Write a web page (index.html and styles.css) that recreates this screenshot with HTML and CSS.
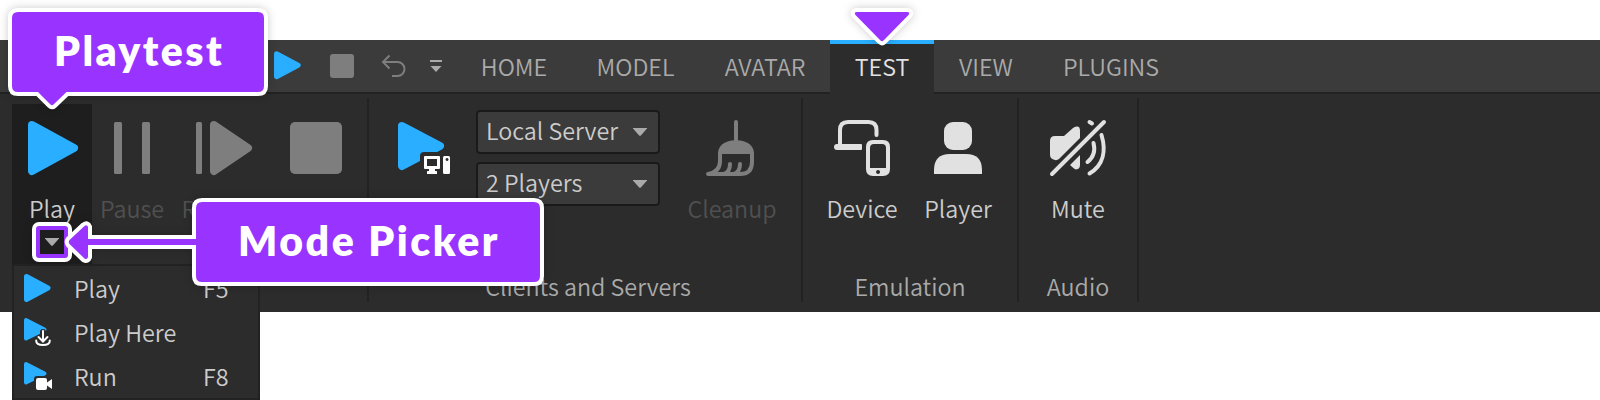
FILE: index.html
```html
<!DOCTYPE html>
<html lang="en">
<head>
<meta charset="utf-8">
<title>Studio Toolbar</title>
<link rel="stylesheet" href="styles.css">
</head>
<body>
<div class="stage">
  <header class="tabbar">
    <div class="quick">
      <svg class="q-play" width="28" height="30" viewBox="274 50 28 30"><path class="blue r5" d="M276.5 53.8L298.2 65.2L276.5 76.7Z"/></svg>
      <svg class="q-stop" width="24" height="24" viewBox="0 0 24 24"><rect class="gray" width="24" height="24" rx="3"/></svg>
      <svg class="q-undo" width="26" height="24" viewBox="381 55 26 24"><path class="line-gray" d="M389.5 56.5L383 63L389.5 69.5M383 63H397.5A7 7 0 0 1 397.5 77H392"/></svg>
      <svg class="q-more" width="12" height="14" viewBox="430 59 12 14"><path class="light" d="M430 60h12v2h-12zM430.500 66h11L436 72z"/></svg>
    </div>
    <nav class="tabs">
      <a class="tab home">HOME</a>
      <a class="tab model">MODEL</a>
      <a class="tab avatar">AVATAR</a>
      <a class="tab test active">TEST</a>
      <a class="tab view">VIEW</a>
      <a class="tab plugins">PLUGINS</a>
    </nav>
  </header>

  <main class="ribbon">
    <section class="group simulation">
      <div class="tools">
        <div class="tool play">
          <svg width="60" height="60" viewBox="22 118 60 60"><path class="blue r8" d="M32 125L74 148L32 171Z"/></svg>
          <span>Play</span>
        </div>
        <div class="tool pause off">
          <svg width="60" height="60" viewBox="102 118 60 60"><rect class="gray" x="114" y="122" width="8" height="52" rx="1.500"/><rect class="gray" x="142" y="122" width="8" height="52" rx="1.500"/></svg>
          <span>Pause</span>
        </div>
        <div class="tool resume off">
          <svg width="60" height="60" viewBox="195 118 60 60"><rect class="gray" x="196" y="122" width="6" height="52" rx="1.500"/><path class="gray r8" d="M214 125L248 148L214 171Z"/></svg>
          <span>Resume</span>
        </div>
        <div class="tool stop off">
          <svg width="60" height="60" viewBox="286 118 60 60"><rect class="gray" x="290" y="122" width="52" height="52" rx="5"/></svg>
        </div>
      </div>
      <div class="caption"></div>
    </section>

    <section class="group clients">
      <div class="tools">
        <div class="tool start">
          <svg width="60" height="60" viewBox="394 118 60 60">
            <path class="blue r8" d="M402 126L440 146L402 166Z"/>
            <rect class="mask" x="420" y="152" width="34" height="26" rx="4"/>
            <path class="white" fill-rule="evenodd" d="M425 156h14q1 0 1 1v11q0 1-1 1h-4v2h1.500q.5 0 .5.700v2.300h-10v-2.300q0-.7.500-.7h1.500v-2h-4q-1 0-1-1v-11q0-1 1-1zM427 159v7h10v-7zM444.500 156h4q1.500 0 1.500 1.500v15q0 1.500-1.500 1.500h-4q-1.500 0-1.500-1.500v-15q0-1.500 1.500-1.500zM447 158a1.500 1.500 0 1 0 .1 0z"/>
          </svg>
        </div>
        <div class="selects">
          <div class="select">Local Server<svg width="14" height="8" viewBox="0 0 14 8"><path class="light" d="M0 0h14v.6L7.900 7.400q-.9.900-1.800 0L0 .6z"/></svg></div>
          <div class="select">2 Players<svg width="14" height="8" viewBox="0 0 14 8"><path class="light" d="M0 0h14v.6L7.900 7.400q-.9.900-1.800 0L0 .6z"/></svg></div>
        </div>
        <div class="tool cleanup off">
          <svg width="60" height="60" viewBox="702 118 60 60">
            <path class="gray" d="M734 122q0-2 2-2t2 2v18.200Q754 142 754 154H718Q718 142 734 140.200Z"/>
            <path class="broom" d="M720 153V161Q720 172 708 174H740Q752 174 752 162V153M730 164Q730 172 724 174M740 164Q740 172 734 174"/>
          </svg>
          <span>Cleanup</span>
        </div>
      </div>
      <div class="caption">Clients and Servers</div>
    </section>

    <section class="group emulation">
      <div class="tools">
        <div class="tool device">
          <svg width="60" height="60" viewBox="832 118 60 60">
            <path class="line-pale" d="M840 146V130Q840 122 848 122H868.500Q876.500 122 876.500 130V135"/>
            <path class="pale" d="M837 144H861Q862 144 862 145V149Q862 150 861 150H837Q834 150 834 147T837 144Z"/>
            <path class="pale" fill-rule="evenodd" d="M873 140H883Q890 140 890 147V169Q890 176 883 176H873Q866 176 866 169V147Q866 140 873 140ZM874 144Q870 144 870 148V168H886V148Q886 144 882 144ZM878 170a2 2 0 1 0 .1 0z"/>
          </svg>
          <span>Device</span>
        </div>
        <div class="tool player">
          <svg width="60" height="60" viewBox="928 118 60 60"><rect class="pale" x="944" y="122" width="28" height="28" rx="9"/><path class="pale" d="M934 174V170Q934 154 950 154H966Q982 154 982 170V174Z"/></svg>
          <span>Player</span>
        </div>
      </div>
      <div class="caption">Emulation</div>
    </section>

    <section class="group audio">
      <div class="tools">
        <div class="tool mute">
          <svg width="60" height="60" viewBox="1048 118 60 60">
            <path class="pale" d="M1050 141Q1050 136 1055 136H1064L1073 128Q1080 124 1080 131V138L1059 159Q1057 160.500 1055 160Q1050 159 1050 155ZM1080 155V165Q1080 169 1076 169.500Q1075 169.500 1070 165Z"/>
            <path class="line-pale" d="M1052 174L1104 122M1089.500 122L1092 123.500M1093.500 143Q1096.500 155 1087.500 162M1101.500 135C1106 150 1104 165 1089.500 173.500"/>
          </svg>
          <span>Mute</span>
        </div>
      </div>
      <div class="caption">Audio</div>
    </section>
  </main>

  <div class="menu">
    <div class="row">
      <svg width="30" height="30" viewBox="23 273 30 30"><path class="blue r5" d="M26.500 276.500L48 288L26.500 299.500Z"/></svg>
      <span class="name">Play</span><span class="key">F5</span>
    </div>
    <div class="row">
      <svg width="30" height="30" viewBox="23 317 30 30"><path class="blue r4" d="M26 320L44.500 329.500L26 338.500Z"/><path class="halo" d="M43 332V341M37 342Q43 347 49 342"/><path class="tray" d="M43 331V341M38.500 337L43 341.500L47.500 337M36.200 340.500Q36 345 43 345T49.800 340.500"/></svg>
      <span class="name">Play Here</span>
    </div>
    <div class="row">
      <svg width="30" height="30" viewBox="23 361 30 30"><path class="blue r4" d="M26 364L44.500 373.500L26 382.500Z"/><rect class="mask" x="34" y="376" width="20" height="16" rx="3"/><path class="white" d="M38 378H45Q47 378 47 380V382.500L52 379V389L47 385.500V388Q47 390 45 390H38Q36 390 36 388V380Q36 378 38 378Z"/></svg>
      <span class="name">Run</span><span class="key">F8</span>
    </div>
  </div>

  <svg class="notes" width="1600" height="400" viewBox="0 0 1600 400">
    <path class="outline" d="M18 12H258Q264 12 264 18V86Q264 92 258 92H66.500L53.500 104.500Q52 106 50.500 104.500L38 92H18Q12 92 12 86V18Q12 12 18 12Z"/>
    <path class="outline" d="M857 12H907Q910.500 12 908.500 15L883.500 40.500Q882 42 880.500 40.500L855.500 15Q853.500 12 857 12Z"/>
    <rect class="picker-white" x="32" y="222" width="40" height="40" rx="7"/>
    <rect class="picker-purple" x="36" y="226" width="32" height="32" rx="3"/>
    <rect class="hole" x="40" y="230" width="24" height="24"/>
    <path class="outline" d="M196 239H88V227Q87 224 84.500 226L69.500 240Q68 242 69.500 244L84.500 258.500Q87 260 88 257V245H196V276Q196 282 202 282H534Q540 282 540 276V208Q540 202 534 202H202Q196 202 196 208Z"/>
    <path class="light" d="M45 238H59V238.600L52.900 245.400Q52 246.300 51.100 245.400L45 238.600Z"/>
  </svg>
  <div class="note playtest">Playtest</div>
  <div class="note picker">Mode Picker</div>
</div>
</body>
</html>
```
FILE: styles.css
```css
* { box-sizing: border-box; }
body {
  margin: 0;
  background: #fff;
  font: 23.3px/30px "Noto Sans CJK JP DemiLight", "Noto Sans CJK JP", "Noto Sans", sans-serif;
  color: #ccc;
}
svg { display: block; flex: none; }
.stage { position: relative; height: 400px; overflow: hidden; padding-top: 40px; }

.tabbar { display: flex; height: 54px; background: #3b3b3b; }
.quick { display: flex; align-items: center; width: 457px; padding-left: 274px; border-bottom: 2px solid #222; }
.q-play { margin-bottom: 2px; }
.q-stop { margin-left: 28px; }
.q-undo { margin-left: 27px; }
.q-more { margin-left: 23px; }
.tabs { display: flex; flex: 1; }
.tabs::after { content: ""; flex: 1; border-bottom: 2px solid #222; }
.tab { padding-top: 11px; text-align: center; color: #aaa; border-bottom: 2px solid #222; }
.home { width: 114px; }
.model { width: 129px; }
.avatar { width: 130px; }
.test { width: 104px; }
.view { width: 104px; }
.plugins { width: 146px; }
.tab.active { padding-top: 7px; background: #2c2c2c; color: #e2e2e2; border-top: 4px solid #2aaeff; border-bottom: 0; }

.ribbon { display: flex; height: 218px; padding: 4px 0 10px; background: #2c2c2c; }
.group { padding-top: 6px; border-right: 2px solid #222; }
.tools { display: flex; height: 167px; }
.caption { text-align: center; color: #aaa; }
.simulation { width: 369px; padding-left: 12px; }
.clients { width: 434px; }
.clients .caption { padding-left: 6px; }
.emulation { width: 216px; }
.emulation .tools { padding-left: 11px; }
.audio { width: 120px; }
.tool { display: flex; flex-direction: column; align-items: center; gap: 15px; height: 160px; padding-top: 14px; }
.tool.off { color: #505050; }
.play { width: 80px; background: #1e1e1e; }
.pause { width: 80px; }
.resume { width: 105px; }
.stop { width: 78px; }
.start { width: 94px; margin-left: 8px; }
.cleanup { width: 126px; margin-left: 9px; }
.device { width: 96px; }
.player { width: 96px; }
.mute { width: 118px; }
.selects { display: flex; flex-direction: column; gap: 8px; margin-left: 5px; padding-top: 6px; }
.select { display: flex; justify-content: space-between; width: 184px; height: 44px; padding: 0 11px 0 8px; line-height: 36px; background: #3b3b3b; border: 2px solid #1a1a1a; border-radius: 4px; }
.select svg { align-self: center; }

.menu { position: absolute; left: 12px; top: 264px; width: 248px; height: 136px; background: #2c2c2c; border: 2px solid #222; }
.row { display: flex; align-items: center; height: 44px; padding-left: 9px; }
.name { width: 129px; margin-left: 21px; }

.blue { fill: #2aaeff; stroke: #2aaeff; stroke-linejoin: round; stroke-width: 0; }
.gray { fill: #7e7e7e; stroke: #7e7e7e; stroke-linejoin: round; stroke-width: 0; }
.r8 { stroke-width: 8; }
.r5 { stroke-width: 5; }
.r4 { stroke-width: 4; }
.light { fill: #aaa; }
.pale { fill: #e1e1e1; }
.white { fill: #fff; }
.mask { fill: #2c2c2c; }
.line-gray { fill: none; stroke: #7e7e7e; stroke-width: 2; }
.line-pale { fill: none; stroke: #e1e1e1; stroke-width: 4; stroke-linecap: round; }
.broom { fill: none; stroke: #7e7e7e; stroke-width: 4; stroke-linecap: round; stroke-linejoin: round; }
.halo { fill: none; stroke: #2c2c2c; stroke-width: 6; stroke-linecap: round; }
.tray { fill: none; stroke: #fff; stroke-width: 2; stroke-linecap: round; }

.notes { position: absolute; left: 0; top: 0; filter: drop-shadow(0 0 4px rgba(0, 0, 0, .2)); }
.outline { fill: #9933ff; stroke: #fff; stroke-width: 8; stroke-linejoin: round; paint-order: stroke; }
.hole { fill: #1e1e1e; }
.picker-white { fill: #fff; }
.picker-purple { fill: #9933ff; }
.note { position: absolute; font: 800 41px/50px Lato, sans-serif; color: #fff; text-align: center; white-space: nowrap; }
.playtest { left: 12px; top: 26px; width: 254px; letter-spacing: 2.4px; }
.picker { left: 196px; top: 216px; width: 346px; letter-spacing: 2.5px; }
```
